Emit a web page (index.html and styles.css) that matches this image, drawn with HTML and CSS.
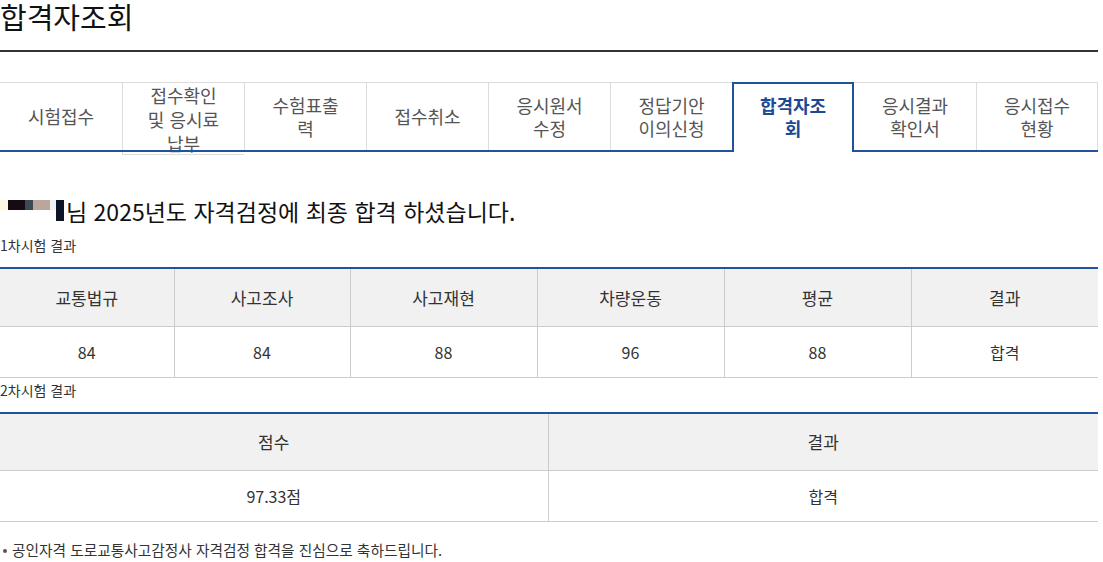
FILE: index.html
```html
<!DOCTYPE html>
<html lang="ko">
<head>
<meta charset="utf-8">
<title>합격자조회</title>
<link rel="stylesheet" href="styles.css">
</head>
<body>
<div class="page">
  <h1 class="title">합격자조회</h1>

  <ul class="tabs">
    <li class="tab">시험접수</li>
    <li class="tab tab-tall">접수확인 및 응시료 납부</li>
    <li class="tab">수험표출력</li>
    <li class="tab">접수취소</li>
    <li class="tab">응시원서 수정</li>
    <li class="tab">정답기안 이의신청</li>
    <li class="tab active">합격자조회</li>
    <li class="tab">응시결과 확인서</li>
    <li class="tab last">응시접수 현황</li>
  </ul>

  <h2 class="result-head">
    <span class="masked" aria-hidden="true">
      <span class="px px1"></span><span class="px px2"></span><span class="px px3"></span><span class="px px4"></span><span class="px px5"></span><span class="px px6"></span>
    </span>님 2025년도 자격검정에 최종 합격 하셨습니다.
  </h2>

  <p class="label">1차시험 결과</p>
  <table class="score">
    <colgroup>
      <col class="c174"><col class="c176"><col class="c187"><col class="c187"><col class="c187"><col class="c187">
    </colgroup>
    <thead>
      <tr><th>교통법규</th><th>사고조사</th><th>사고재현</th><th>차량운동</th><th>평균</th><th>결과</th></tr>
    </thead>
    <tbody>
      <tr><td>84</td><td>84</td><td>88</td><td>96</td><td>88</td><td>합격</td></tr>
    </tbody>
  </table>

  <p class="label label2">2차시험 결과</p>
  <table class="score">
    <colgroup>
      <col class="c548"><col class="c550">
    </colgroup>
    <thead>
      <tr><th>점수</th><th>결과</th></tr>
    </thead>
    <tbody>
      <tr><td>97.33점</td><td>합격</td></tr>
    </tbody>
  </table>

  <ul class="notes">
    <li>공인자격 도로교통사고감정사 자격검정 합격을 진심으로 축하드립니다.</li>
  </ul>
</div>
</body>
</html>
```

FILE: styles.css
```css
* { box-sizing: border-box; }

html, body {
  margin: 0;
  padding: 0;
  background: #fff;
}

body {
  font-family: "Noto Sans CJK KR", "Noto Sans", sans-serif;
  color: #333;
}

.page {
  width: 1098px;
}

.title {
  margin: 0;
  font-size: 29px;
  font-weight: 400;
  line-height: 32px;
  color: #111;
  padding-bottom: 18px;
  border-bottom: 2px solid #333;
}

.tabs {
  position: relative;
  display: flex;
  align-items: flex-start;
  list-style: none;
  margin: 30px 0 0;
  padding: 0;
  height: 70px;
}

.tabs::after {
  content: "";
  position: absolute;
  left: 0;
  right: 0;
  top: 68px;
  height: 2px;
  background: #1f539f;
  z-index: 1;
}

.tab {
  width: 122px;
  height: 68px;
  display: flex;
  align-items: center;
  justify-content: center;
  text-align: center;
  padding: 0 24px;
  font-size: 18px;
  line-height: 23px;
  color: #555;
  border-top: 1px solid #dcdcdc;
  border-left: 1px solid #dcdcdc;
  background: #fff;
  word-break: keep-all;
  overflow-wrap: anywhere;
}

.tab:first-child { border-left: 0; }
.tab.last { border-right: 1px solid #dcdcdc; }

.tab-tall {
  height: 73px;
  align-items: flex-start;
  line-height: 24px;
  padding-top: 0;
  border-bottom: 1px solid #dcdcdc;
}

.tab.active {
  position: relative;
  z-index: 2;
  height: 70px;
  color: #1a4a94;
  font-weight: 700;
  border: 2px solid #1f539f;
  border-bottom: 0;
  padding-bottom: 2px;
}

.tab.active + .tab { border-left: 0; }

.result-head {
  margin: 44px 0 0;
  font-size: 23px;
  font-weight: 400;
  line-height: 30px;
  color: #111;
  display: flex;
  align-items: center;
}

.masked {
  display: inline-flex;
  align-items: flex-start;
  height: 22px;
  margin-right: 2px;
}

.px { display: block; height: 10px; }
.px1 { width: 8px; background: #fff8e2; }
.px2 { width: 17px; background: #160b12; }
.px3 { width: 8px; background: #3d4954; }
.px4 { width: 17px; background: #bca699; }
.px5 { width: 6px; background: #eef3f8; }
.px6 { width: 8px; height: 21px; background: #0c1428; }

.label {
  margin: 9px 0 0;
  font-size: 14px;
  line-height: 20px;
  color: #333;
}

.label2 { margin-top: 2px; }

.score {
  width: 1098px;
  table-layout: fixed;
  border-collapse: collapse;
  margin-top: 12px;
  border-top: 2px solid #1f539f;
}

.c174 { width: 174px; }
.c176 { width: 176px; }
.c187 { width: 187px; }
.c548 { width: 548px; }
.c550 { width: 550px; }

.score th,
.score td {
  text-align: center;
  color: #333;
  border-bottom: 1px solid #cccccc;
  border-left: 1px solid #cccccc;
  padding: 0;
}

.score th:first-child,
.score td:first-child { border-left: 0; }

.score th {
  height: 58px;
  background: #f1f1f1;
  font-size: 17px;
  font-weight: 400;
}

.score td {
  height: 51px;
  font-size: 16px;
}

.notes {
  list-style: none;
  margin: 18px 0 0;
  padding: 0;
}

.notes li {
  position: relative;
  padding-left: 12px;
  font-size: 14.7px;
  line-height: 20px;
  color: #333;
}

.notes li::before {
  content: "";
  position: absolute;
  left: 3px;
  top: 9px;
  width: 4px;
  height: 4px;
  border-radius: 50%;
  background: #555;
}
```
